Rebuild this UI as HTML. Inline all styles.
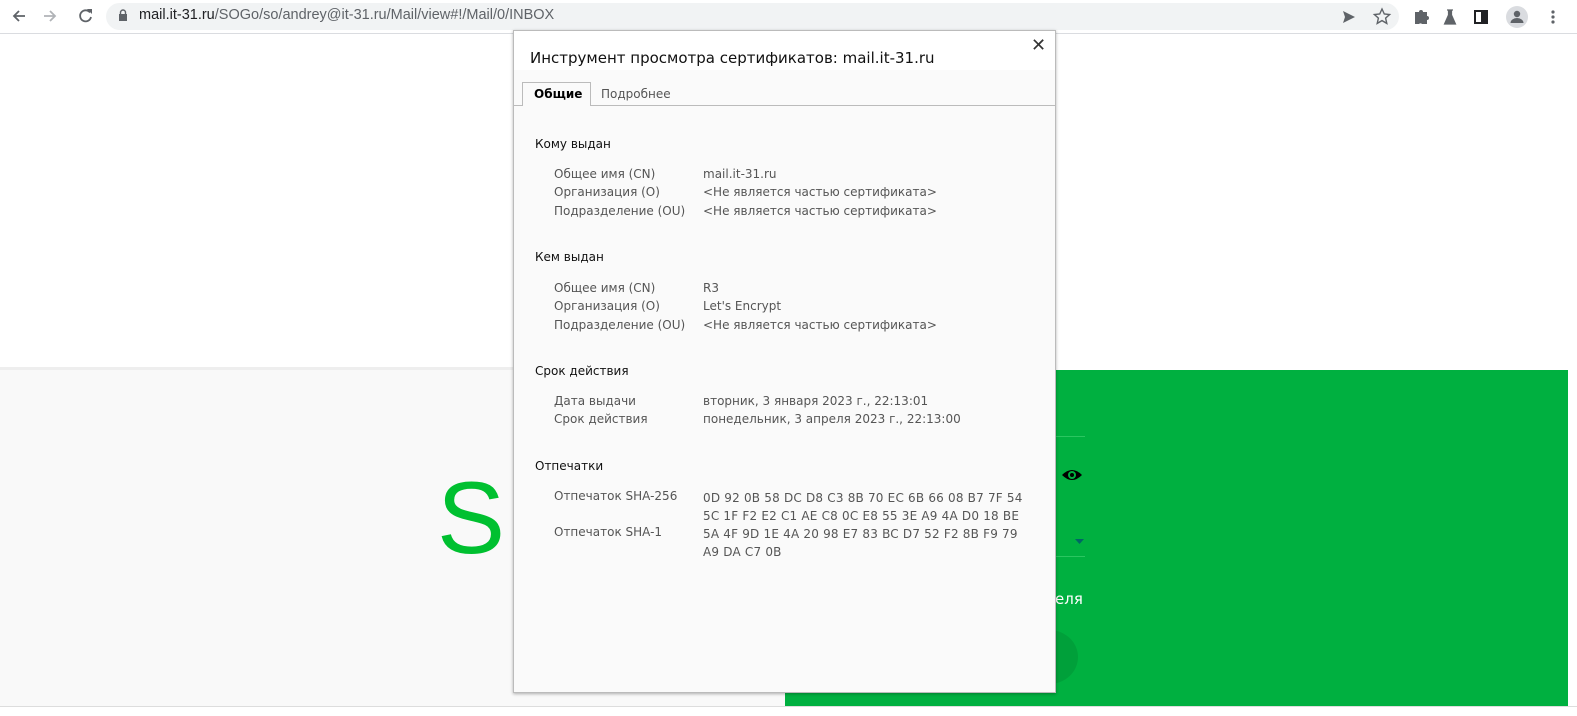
<!DOCTYPE html>
<html><head><meta charset="utf-8"><style>
*{margin:0;padding:0;box-sizing:border-box}
body{width:1577px;height:716px;position:relative;overflow:hidden;background:#fff;font-family:"DejaVu Sans","Liberation Sans",sans-serif}
.abs{position:absolute}
.t{font-size:12px;color:#555;position:absolute;white-space:nowrap}
.h{font-size:12px;color:#111;position:absolute}
</style></head><body>
<div class="abs" style="left:0;top:0;width:1577px;height:34px;background:#fff;border-bottom:1px solid #dadce0"></div>
<div class="abs" style="left:106px;top:3px;width:1293px;height:27px;background:#f1f3f4;border-radius:14px"></div>
<svg class="abs" style="left:10px;top:7px" width="90" height="18" viewBox="0 0 90 18">
<path d="M15 9H4M9 4L4 9l5 5" stroke="#5f6368" stroke-width="1.8" fill="none"/>
<path d="M34 9h11M40 4l5 5-5 5" stroke="#b0b3b7" stroke-width="1.8" fill="none"/>
<path d="M80 5.5A5.5 5.5 0 1 0 81 10" stroke="#5f6368" stroke-width="1.8" fill="none"/><path d="M77 2h5v5z" fill="#5f6368"/>
</svg>
<svg class="abs" style="left:118px;top:9px" width="10" height="13"><rect x="1" y="5" width="8" height="7" fill="#5f6368"/><path d="M2.5 5V3.5a2.5 2.5 0 0 1 5 0V5" stroke="#5f6368" stroke-width="1.4" fill="none"/></svg>
<div class="abs" style="left:139px;top:7px;font-size:14.5px;font-family:'Liberation Sans',sans-serif;color:#5f6368;white-space:nowrap"><span style="color:#202124">mail.it-31.ru</span>/SOGo/so/andrey@it-31.ru/Mail/view#!/Mail/0/INBOX</div>
<svg class="abs" style="left:1340px;top:6px" width="237" height="22" viewBox="0 0 237 22">
<path d="M3 5l12 6-12 6 2-6z" fill="#5f6368"/>
<path d="M42 3l2.3 5 5.3.5-4 3.6 1.2 5.3-4.8-2.8-4.8 2.8 1.2-5.3-4-3.6 5.3-.5z" stroke="#5f6368" stroke-width="1.4" fill="none"/>
<path d="M75 6h4a2 2 0 0 1 4 0h4v4a2 2 0 0 1 0 4v4h-5a2 2 0 0 0-3 0h-4z" fill="#5f6368"/>
<path d="M107 4h6M108.5 4v5l-4 9h11l-4-9V4" fill="#5f6368" stroke="#5f6368" stroke-width="1.2"/>
<rect x="135" y="5" width="12" height="12" stroke="#202124" stroke-width="2" fill="none"/><rect x="141" y="5" width="6" height="12" fill="#202124"/>
<circle cx="177" cy="11" r="11" fill="#dadce0"/><circle cx="177" cy="8" r="3.2" fill="#5f6368"/><path d="M170.5 17a6.5 5 0 0 1 13 0z" fill="#5f6368"/>
<circle cx="213" cy="6" r="1.6" fill="#5f6368"/><circle cx="213" cy="11" r="1.6" fill="#5f6368"/><circle cx="213" cy="16" r="1.6" fill="#5f6368"/>
</svg>
<div class="abs" style="left:0;top:367px;width:785px;height:339px;background:#f9f9f9;border-top:3px solid #eee"></div>
<div class="abs" style="left:785px;top:370px;width:783px;height:336px;background:#00b040"></div>
<div class="abs" style="left:0;top:706px;width:1577px;height:10px;background:#fff;border-top:1px solid #ddd"></div>
<div class="abs" style="left:437px;top:467px;font-size:102px;font-family:'Liberation Sans',sans-serif;color:#00c030;line-height:1">S</div>
<div class="abs" style="left:1055px;top:436px;width:30px;height:1px;background:#2ac660"></div>
<div class="abs" style="left:1055px;top:556px;width:30px;height:1px;background:#2ac660"></div>
<svg class="abs" style="left:1061px;top:465px" width="24" height="20"><path d="M1 10Q11 0 21 10Q11 20 1 10z" fill="#000"/><circle cx="11" cy="10" r="4" fill="#00b040"/><circle cx="11" cy="10" r="2" fill="#000"/></svg>
<svg class="abs" style="left:1075px;top:539px" width="10" height="6"><path d="M0 0h9l-4.5 5z" fill="#066"/></svg>
<div class="abs" style="left:1055px;top:590px;font-size:15px;color:#fff">еля</div>
<div class="abs" style="left:1020px;top:630px;width:58px;height:54px;border-radius:50%;background:#00a03a"></div>
<div class="abs" style="left:513px;top:30px;width:543px;height:663px;background:#fafafa;border:1px solid #bbb;box-shadow:0 1px 3px rgba(0,0,0,.3)"></div>
<div class="abs" style="left:514px;top:31px;width:541px;height:39px;background:#fff"></div>
<div class="abs" style="left:530px;top:49px;font-size:15px;color:#111">Инструмент просмотра сертификатов: mail.it-31.ru</div>
<div class="abs" style="left:1031px;top:35px;font-size:18px;color:#333">✕</div>
<div class="abs" style="left:514px;top:105px;width:541px;height:1px;background:#bbb"></div>
<div class="abs" style="left:522px;top:82px;width:69px;height:24px;background:#fafafa;border:1px solid #bbb;border-bottom:none"></div>
<div class="abs" style="left:534px;top:87px;font-size:12px;font-weight:bold;color:#000">Общие</div>
<div class="abs" style="left:601px;top:87px;font-size:12px;color:#555">Подробнее</div>

<div class="h" style="left:535px;top:137px">Кому выдан</div>
<div class="t" style="left:554px;top:167px">Общее имя (CN)</div><div class="t" style="left:703px;top:167px">mail.it-31.ru</div>
<div class="t" style="left:554px;top:185px">Организация (O)</div><div class="t" style="left:703px;top:185px">&lt;Не является частью сертификата&gt;</div>
<div class="t" style="left:554px;top:204px">Подразделение (OU)</div><div class="t" style="left:703px;top:204px">&lt;Не является частью сертификата&gt;</div>

<div class="h" style="left:535px;top:250px">Кем выдан</div>
<div class="t" style="left:554px;top:281px">Общее имя (CN)</div><div class="t" style="left:703px;top:281px">R3</div>
<div class="t" style="left:554px;top:299px">Организация (O)</div><div class="t" style="left:703px;top:299px">Let's Encrypt</div>
<div class="t" style="left:554px;top:318px">Подразделение (OU)</div><div class="t" style="left:703px;top:318px">&lt;Не является частью сертификата&gt;</div>

<div class="h" style="left:535px;top:364px">Срок действия</div>
<div class="t" style="left:554px;top:394px">Дата выдачи</div><div class="t" style="left:703px;top:394px">вторник, 3 января 2023 г., 22:13:01</div>
<div class="t" style="left:554px;top:412px">Срок действия</div><div class="t" style="left:703px;top:412px">понедельник, 3 апреля 2023 г., 22:13:00</div>

<div class="h" style="left:535px;top:459px">Отпечатки</div>
<div class="t" style="left:554px;top:489px">Отпечаток SHA-256</div>
<div class="t" style="left:703px;top:489px;line-height:18px;letter-spacing:0.2px">0D 92 0B 58 DC D8 C3 8B 70 EC 6B 66 08 B7 7F 54<br>5C 1F F2 E2 C1 AE C8 0C E8 55 3E A9 4A D0 18 BE</div>
<div class="t" style="left:554px;top:525px">Отпечаток SHA-1</div>
<div class="t" style="left:703px;top:525px;line-height:18px;letter-spacing:0.2px">5A 4F 9D 1E 4A 20 98 E7 83 BC D7 52 F2 8B F9 79<br>A9 DA C7 0B</div>
</body></html>
